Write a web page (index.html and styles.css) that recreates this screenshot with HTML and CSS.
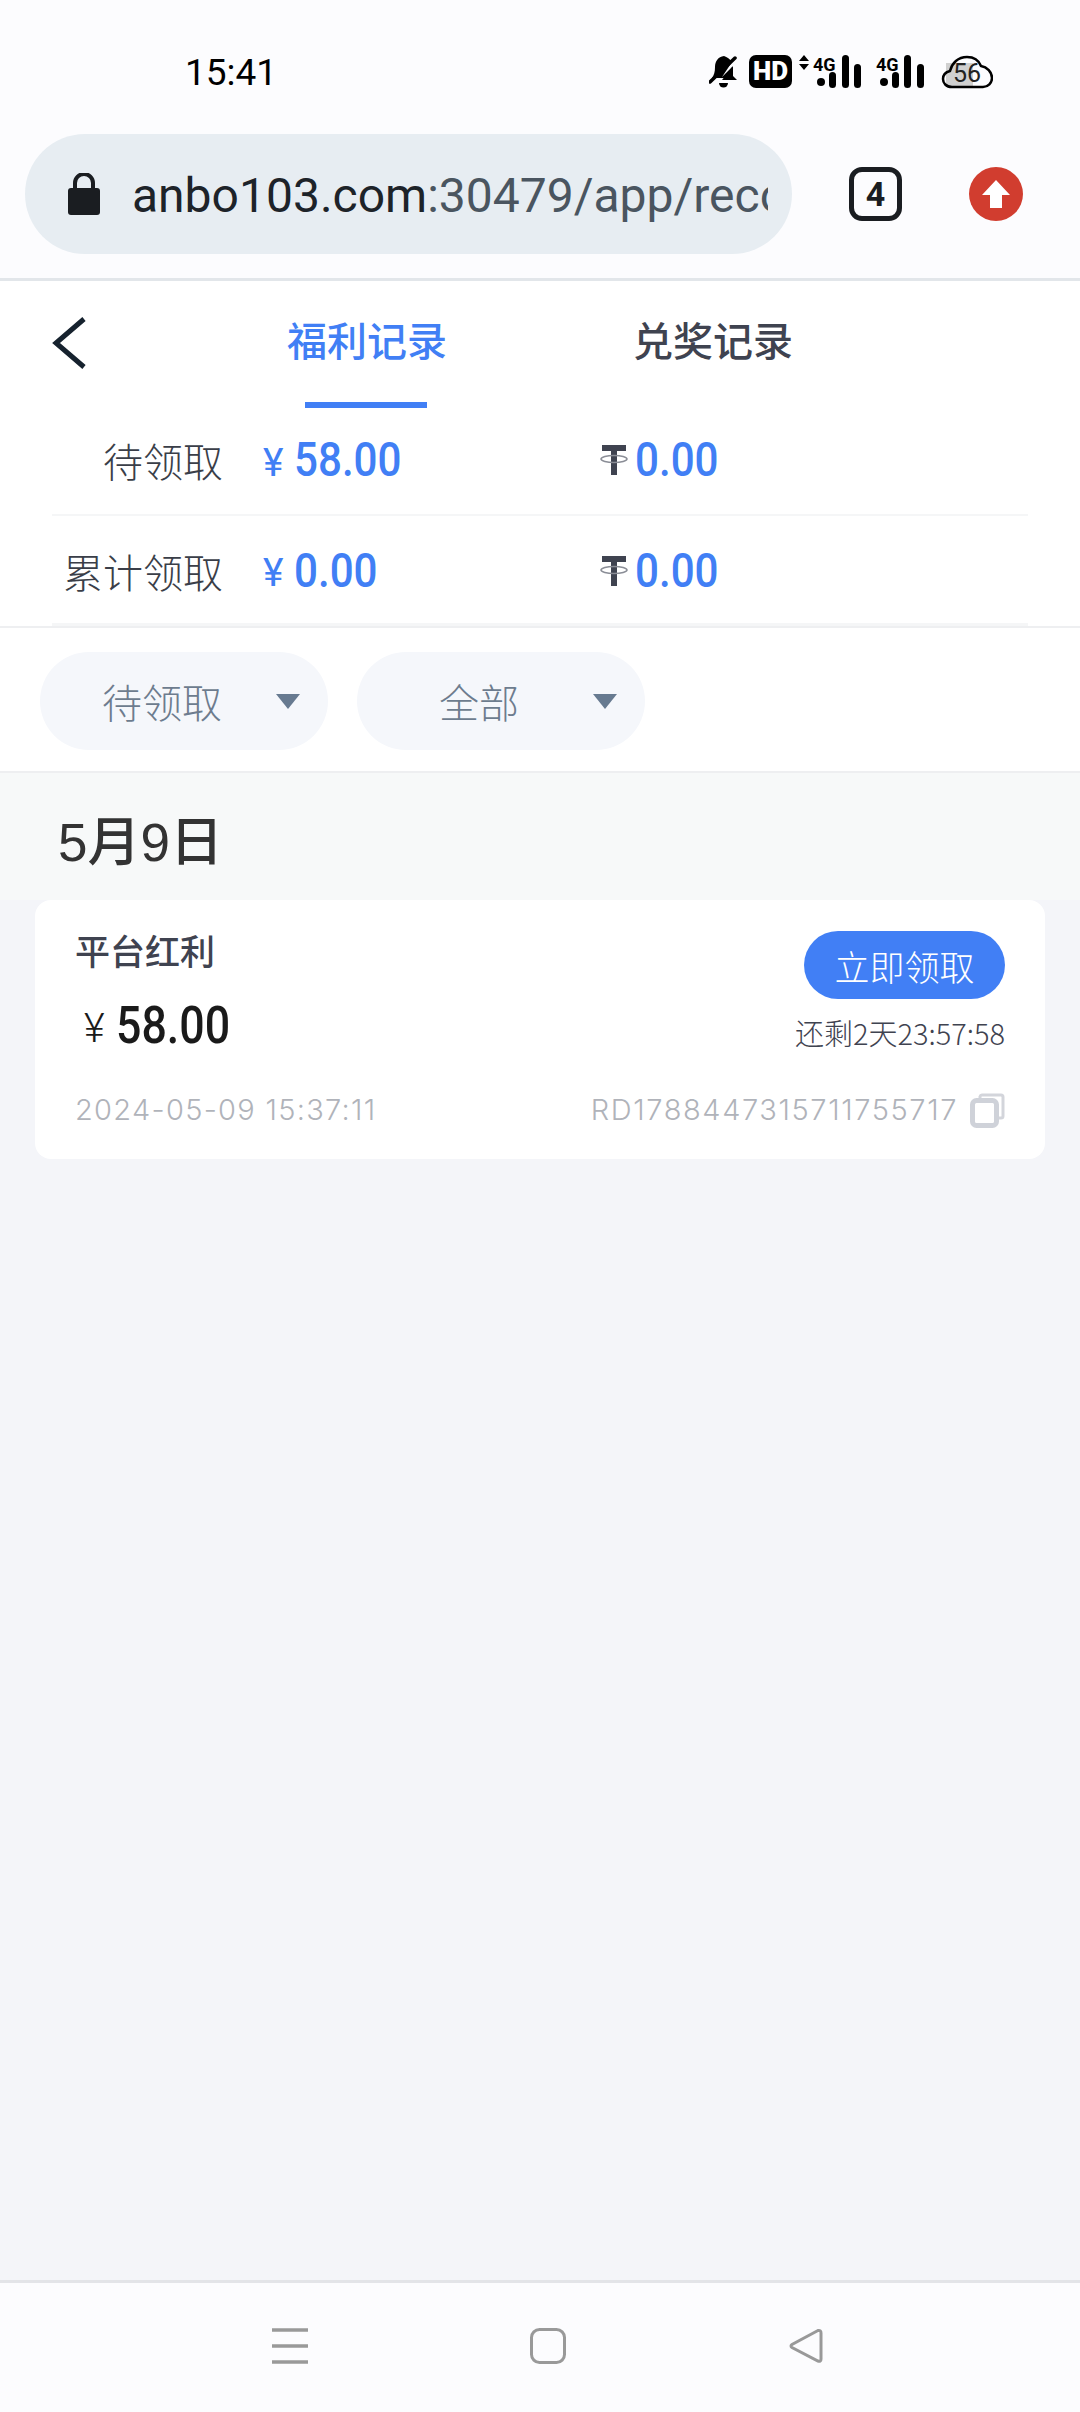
FILE: index.html
```html
<!DOCTYPE html>
<html lang="zh-CN">
<head>
<meta charset="utf-8">
<title>福利记录</title>
<link rel="stylesheet" href="styles.css">
</head>
<body>
<div class="phone">
  <header class="statusbar">
    <span class="time">15:41</span>
    <svg class="status-icons" width="284" height="34" viewBox="0 0 284 34">
      <path d="M15 1c-6 1-9 5-9 11 0 5-1 8-3 11h17L23 18V12L13 22 23 7c-2-3-5-5-8-6z" fill="#000"/>
      <path d="M1 27 26 3" stroke="#000" stroke-width="3.500" stroke-linecap="round"/>
      <path d="M24 11v10l4 4H15l-2 0z" fill="#000"/>
      <path d="M10 28h9a4.500 4.500 0 0 1-9 0z" fill="#000"/>
      <rect x="40" y="0" width="43" height="33" rx="7" fill="#000"/>
      <text x="61.500" y="25" class="hd">HD</text>
      <path d="M90 6l5-6 5 6zM90 9l5 6 5-6z" fill="#000"/>
      <text x="104" y="16" class="g4">4G</text>
      <circle cx="112" cy="27" r="4"/>
      <rect x="120" y="17" width="7" height="16" rx="3.500"/>
      <rect x="133" y="0" width="7" height="33" rx="3.500"/>
      <rect x="145" y="9" width="7" height="24" rx="3.500"/>
      <text x="167" y="16" class="g4">4G</text>
      <circle cx="175" cy="27" r="4"/>
      <rect x="183" y="17" width="7" height="16" rx="3.500"/>
      <rect x="195" y="0" width="7" height="33" rx="3.500"/>
      <rect x="208" y="9" width="7" height="24" rx="3.500"/>
      <path d="M237 8h27v23h-27z" fill="#d0d0d0"/>
      <path d="M243 32C237 32 234 28 234 24 234 20 237 17 241 16 243 8 249 2 258 2 265 2 270 6 272 11 278 12 283 17 283 23 283 28 279 32 274 32Z" fill="none" stroke="#000" stroke-width="2.500"/>
      <text x="258" y="27" class="batt">56</text>
    </svg>
  </header>

  <div class="toolbar">
    <div class="urlbar">
      <svg class="lock" width="32" height="42" viewBox="0 0 32 42">
        <path d="M7 17V10a9 9 0 0 1 18 0v7" fill="none" stroke="#1a1d21" stroke-width="4"/>
        <rect y="15" width="32" height="27" rx="3" fill="#1a1d21"/>
      </svg>
      <div class="url"><span class="host">anbo103.com</span>:30479/app/record</div>
    </div>
    <div class="tabcount">4</div>
    <svg class="update" width="54" height="54" viewBox="0 0 54 54">
      <circle cx="27" cy="27" r="27" fill="#d13d2f"/>
      <path d="M27 13 41 28H33V41H21V28H13z" fill="#fff"/>
    </svg>
  </div>

  <nav class="tabs">
    <svg class="back" width="34" height="52" viewBox="0 0 34 52">
      <path d="M32 2 4 26l28 24" fill="none" stroke="#16222e" stroke-width="5"/>
    </svg>
    <div class="tab active"><span class="tab-label">福利记录</span><span class="tab-line"></span></div>
    <div class="tab"><span class="tab-label">兑奖记录</span></div>
  </nav>

  <section class="stats">
    <div class="stat-row">
      <span class="stat-label">待领取</span>
      <span class="stat-cell"><span class="yen">¥</span><span class="num">58.00</span></span>
      <span class="stat-cell">
        <svg class="tether" width="28" height="30" viewBox="0 0 28 30"><path d="M2 0h24v6H17v24h-6V6H2z" fill="#3f4350"/><ellipse cx="14" cy="14" rx="13" ry="3.500" fill="none" stroke="#8a8d96" stroke-width="1.500"/></svg>
        <span class="num">0.00</span>
      </span>
    </div>
    <div class="stat-row">
      <span class="stat-label">累计领取</span>
      <span class="stat-cell"><span class="yen">¥</span><span class="num">0.00</span></span>
      <span class="stat-cell">
        <svg class="tether" width="28" height="30" viewBox="0 0 28 30"><path d="M2 0h24v6H17v24h-6V6H2z" fill="#3f4350"/><ellipse cx="14" cy="14" rx="13" ry="3.500" fill="none" stroke="#8a8d96" stroke-width="1.500"/></svg>
        <span class="num">0.00</span>
      </span>
    </div>
  </section>

  <section class="filters">
    <div class="pill"><span class="pill-text">待领取</span><span class="caret"></span></div>
    <div class="pill"><span class="pill-text">全部</span><span class="caret"></span></div>
  </section>

  <main class="content">
    <h2 class="date">5月9日</h2>
    <article class="card">
      <div class="card-top">
        <div class="card-left">
          <div class="card-title">平台红利</div>
          <div class="card-amount"><span class="card-yen">¥</span><span class="card-num">58.00</span></div>
        </div>
        <div class="card-right">
          <button class="claim">立即领取</button>
          <div class="countdown">还剩2天23:57:58</div>
        </div>
      </div>
      <div class="card-bottom">
        <span class="stamp">2024-05-09 15:37:11</span>
        <span class="ref">RD1788447315711755717
          <svg class="copy" width="35" height="35" viewBox="0 0 35 35">
            <path d="M10 5V3.500A2 2 0 0 1 12 2h19a2 2 0 0 1 2 2v19a2 2 0 0 1-2 2h-2" fill="none" stroke="#d3d5db" stroke-width="3"/>
            <rect x="2.500" y="7.500" width="24" height="25" rx="4" fill="#fff" stroke="#cfd2d9" stroke-width="5"/>
          </svg>
        </span>
      </div>
    </article>
  </main>

  <footer class="navbar">
    <svg class="nav-menu" width="36" height="36" viewBox="0 0 36 36"><path d="M0 2h36M0 18h36M0 34h36" stroke="#999" stroke-width="3.500"/></svg>
    <svg class="nav-home" width="36" height="36" viewBox="0 0 36 36"><rect x="1.500" y="1.500" width="33" height="33" rx="8" fill="none" stroke="#999" stroke-width="3"/></svg>
    <svg class="nav-back" width="34" height="36" viewBox="0 0 34 36"><path d="M29 2.500 3 16.500q-2 1.500 0 3L29 33q3 1 3-2V5q0-3-3-2.500z" fill="none" stroke="#999" stroke-width="3"/></svg>
  </footer>
</div>
</body>
</html>
```
FILE: styles.css
```css
* { box-sizing: border-box; }
html, body { margin: 0; padding: 0; }
body {
  width: 1080px;
  height: 2412px;
  background: #f4f5f9;
  font-family: "Noto Sans CJK SC", Roboto, sans-serif;
  overflow: hidden;
}
.phone { width: 1080px; height: 2412px; display: flex; flex-direction: column; }

/* status bar */
.statusbar {
  height: 134px;
  background: #fcfcfe;
  display: flex;
  align-items: flex-start;
  padding: 55px 87px 0 185px;
  justify-content: space-between;
}
.time { font: 400 37px/34px Roboto, sans-serif; color: #000; margin-top: 1px; }
.status-icons text { font-family: Roboto, sans-serif; text-anchor: middle; }
.status-icons .hd { font-size: 26px; font-weight: 900; fill: #fff; }
.status-icons .g4 { font-size: 18px; font-weight: 700; text-anchor: start; }
.status-icons .batt { font-size: 25px; fill: #222; }

/* browser toolbar */
.toolbar {
  height: 147px;
  background: #fcfcfe;
  border-bottom: 3px solid #e2e6ea;
  display: flex;
  align-items: flex-start;
  padding-left: 25px;
}
.urlbar {
  width: 767px;
  height: 120px;
  border-radius: 60px;
  background: #e7edf2;
  display: flex;
  align-items: center;
  padding-left: 43px;
}
.lock { flex: none; margin-right: 32px; }
.url {
  width: 636px;
  padding-top: 3px;
  overflow: hidden;
  white-space: nowrap;
  font: 400 48px/60px Roboto, sans-serif;
  color: #4a5560;
}
.host { color: #1d2329; }
.tabcount {
  width: 53px;
  height: 54px;
  margin: 33px 0 0 57px;
  border: 5px solid #1a1d21;
  border-radius: 13px;
  display: flex;
  align-items: center;
  justify-content: center;
  font: 700 34px/1 Roboto, sans-serif;
  color: #1a1d21;
}
.update { margin: 33px 0 0 67px; flex: none; }

/* tabs */
.tabs {
  height: 127px;
  background: #fff;
  display: flex;
  padding-left: 52px;
}
.back { margin-top: 36px; flex: none; margin-right: 107px; }
.tab { width: 346px; display: flex; flex-direction: column; align-items: center; padding-top: 28px; }
.tab-label { font-size: 40px; line-height: 60px; font-weight: 500; color: #3f4350; margin-left: 2px; }
.tab.active .tab-label { color: #417ff5; }
.tab-line { width: 122px; height: 6px; margin-top: 33px; background: #417ff5; }

/* summary */
.stats { background: #fff; padding: 0 52px; }
.stat-row {
  height: 108px;
  display: flex;
  align-items: center;
  border-bottom: 2px solid #f5f6f7;
  padding-bottom: 2px;
}
.stat-row + .stat-row { height: 110px; border-bottom-width: 3px; padding: 2px 0 0; }
.stat-label {
  width: 171px;
  margin-right: 40px;
  text-align: right;
  font-size: 40px;
  font-weight: 300;
  color: #3a3e48;
  white-space: nowrap;
}
.stat-cell { width: 337px; display: flex; align-items: center; color: #417ff5; }
.yen { font: 400 39px/1 Roboto, sans-serif; width: 31px; padding-top: 6px; }
.tether { margin-right: 7px; flex: none; }
.num {
  font: 500 49px/50px Roboto, sans-serif;
  display: inline-block;
  transform: scaleX(0.86);
  transform-origin: left center;
}

/* filters */
.filters {
  height: 147px;
  background: #fff;
  border-top: 2px solid #eeeff1;
  border-bottom: 2px solid #eeeff1;
  display: flex;
  gap: 29px;
  padding: 24px 0 0 40px;
}
.pill {
  width: 288px;
  height: 98px;
  border-radius: 49px;
  background: #f5f7fb;
  display: flex;
  align-items: center;
}
.pill-text {
  width: 244px;
  text-align: center;
  font-size: 40px;
  font-weight: 300;
  color: #6d7c8e;
}
.caret {
  margin-left: -8px;
  width: 0;
  height: 0;
  border-left: 12px solid transparent;
  border-right: 12px solid transparent;
  border-top: 15px solid #677a90;
}

/* list */
.content { flex: 1; background: #f4f5f9; }
.date {
  margin: 0;
  height: 127px;
  background: #f7f9f9;
  padding: 12px 0 0 58px;
  font: 500 53px/115px "Liberation Sans", "Noto Sans CJK SC", sans-serif;
  color: #333;
}
.card {
  margin: 0 35px;
  height: 259px;
  background: #fff;
  border-radius: 16px;
  padding: 31px 40px 0 40px;
}
.card-top { display: flex; justify-content: space-between; }
.card-title { font-size: 35px; line-height: 44px; font-weight: 500; color: #3f4350; margin-top: -3px; }
.card-amount { display: flex; align-items: center; margin: 26px 0 0 9px; }
.card-yen { font: 300 40px/1 Roboto, sans-serif; color: #1a1a1a; width: 32px; padding-top: 6px; }
.card-num {
  font: 500 52px/56px Roboto, sans-serif;
  color: #1a1a1a;
  display: inline-block;
  transform: scaleX(0.86);
  transform-origin: left center;
}
.card-right { display: flex; flex-direction: column; align-items: flex-end; }
.claim {
  width: 201px;
  height: 68px;
  border: 0;
  padding: 0;
  border-radius: 34px;
  background: #417ff5;
  color: #fff;
  font-family: inherit;
  font-size: 35px;
  font-weight: 300;
}
.countdown { margin-top: 14px; font: 300 29px/38px "Noto Sans CJK SC", sans-serif; color: #3f4350; white-space: nowrap; }
.card-bottom {
  display: flex;
  justify-content: space-between;
  align-items: center;
  margin-top: 38px;
  font: 300 29px/36px Inter, sans-serif;
  letter-spacing: 1.3px;
  color: #b0b3ba;
}
.ref { display: flex; align-items: center; gap: 12px; letter-spacing: 1.6px; }
.copy { flex: none; }

/* system nav */
.navbar {
  height: 132px;
  background: #fcfcfe;
  border-top: 3px solid #e3e4e8;
  padding-top: 45px;
  display: flex;
  align-items: flex-start;
  padding-left: 272px;
}
.nav-home { margin-left: 222px; }
.nav-back { margin-left: 223px; }
```
